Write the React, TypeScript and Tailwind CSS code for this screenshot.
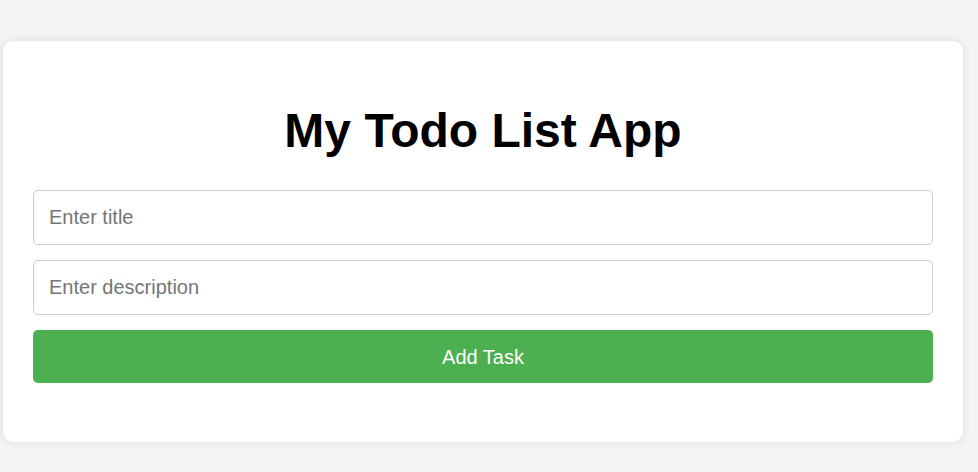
import React, { useState } from 'react';

const App: React.FC = () => {
  const [title, setTitle] = useState('');
  const [description, setDescription] = useState('');

  return (
    <div className="min-h-[472px] bg-[#f4f4f4] pt-[41px] pl-[3px] font-['Liberation_Sans',Arial,sans-serif]">
      <div className="w-[960px] h-[401px] bg-white rounded-[10px] shadow-[0_0_10px_rgba(0,0,0,0.1)] px-[30px] pt-[62px]">
        <h1 className="text-[48px] leading-[55px] font-bold text-black text-center">My Todo List App</h1>

        <div className="mt-[32px] flex flex-col gap-[15px]">
          <input
            value={title}
            onChange={(e) => setTitle(e.target.value)}
            placeholder="Enter title"
            className="w-full h-[55px] px-[15px] border border-[#ccc] rounded-[5px] text-[20px] text-black placeholder:text-[#757575] outline-none"
          />
          <input
            value={description}
            onChange={(e) => setDescription(e.target.value)}
            placeholder="Enter description"
            className="w-full h-[55px] px-[15px] border border-[#ccc] rounded-[5px] text-[20px] text-black placeholder:text-[#757575] outline-none"
          />
          <button className="w-full h-[53px] bg-[#4caf50] text-white text-[20px] rounded-[5px]">
            Add Task
          </button>
        </div>
      </div>
    </div>
  );
};

export default App;
